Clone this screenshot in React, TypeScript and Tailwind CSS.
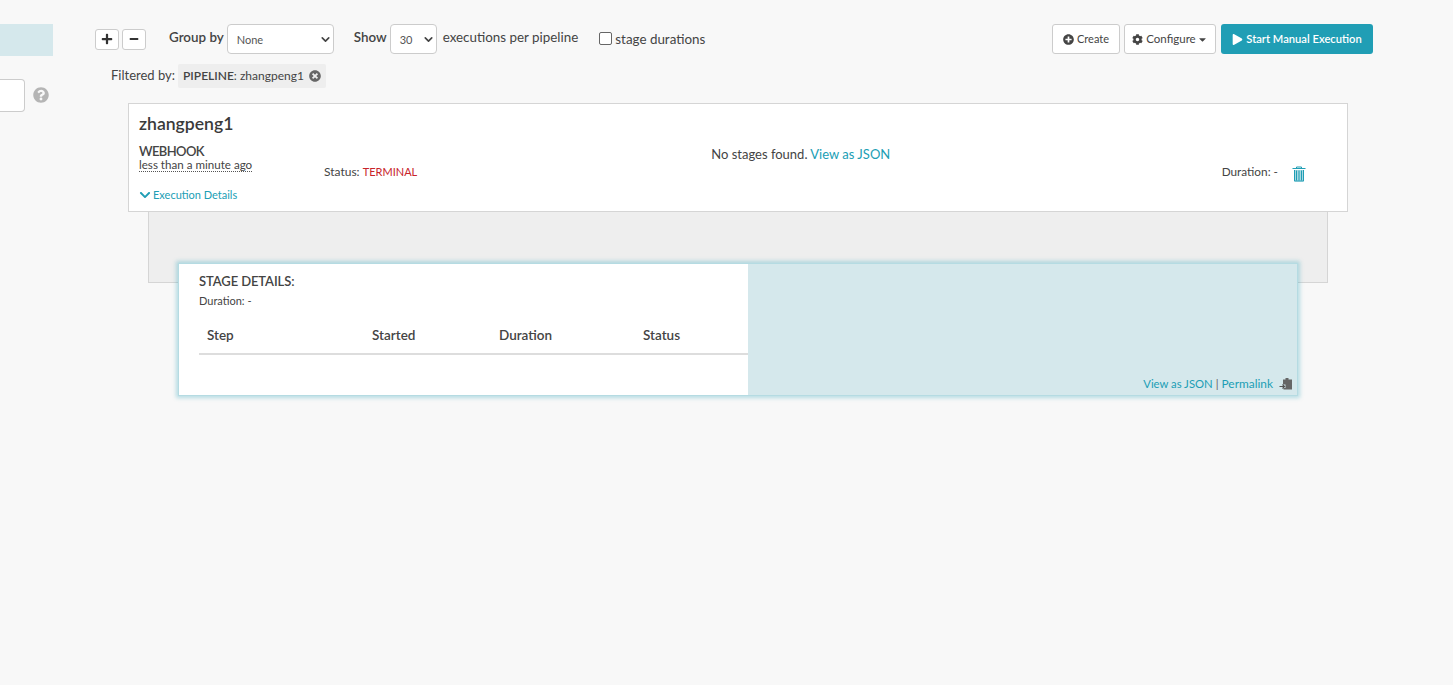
import { ChevronDown } from "lucide-react";
import { FaCog, FaPlay, FaPlusCircle, FaQuestionCircle, FaTimesCircle, FaChevronDown, FaCaretDown, FaPlus, FaMinus } from "react-icons/fa";

const font = "font-['Lato','Noto_Sans',sans-serif]";

function TrashIcon() {
  return (
    <svg width="14" height="16" viewBox="0 0 14 16" className="ml-[14px] mt-[4px]">
      <path d="M0.5 2.5h13M4.5 2.5V1h5v1.5" fill="none" stroke="#209eb5" strokeWidth="1" />
      <path d="M2 4h10v11.5H2z" fill="#a9d8e1" />
      <path d="M2.5 4v11h9V4M4.5 4.5v10M7 4.5v10M9.5 4.5v10" fill="none" stroke="#209eb5" strokeWidth="1" />
    </svg>
  );
}

function ClipboardIcon() {
  return (
    <svg width="14" height="13" viewBox="0 0 14 13" className="ml-[6px] mb-px">
      <path d="M4 2.5h2.5V1h3v1.5H13V12.5H4.5V11H6.5V7.5H4z" fill="#666" />
      <path d="M0.5 9.5h5M3.5 7.5l2 2-2 2" fill="none" stroke="#555" strokeWidth="1.2" />
    </svg>
  );
}

function FakeSelect({ value, className }: { value: string; className: string }) {
  return (
    <div className={`flex items-center justify-between rounded-[4px] border border-[#ccc] bg-white text-[11px] text-[#555] ${className}`}>
      <span className="mt-[2px]">{value}</span>
      <ChevronDown size={13} strokeWidth={3} className="text-[#444]" />
    </div>
  );
}

function Sidebar() {
  return (
    <div className="w-[95px] shrink-0 pt-[24px]">
      <div className="h-[32px] w-[53px] bg-[#d5e8ec]" />
      <div className="mt-[23px] flex items-center">
        <div className="h-[33px] w-[25px] rounded-r-[4px] border border-l-0 border-[#ccc] bg-white" />
        <FaQuestionCircle size={16} className="ml-[8px] -mt-[1px] text-[#b5b5b5]" />
      </div>
    </div>
  );
}

function Toolbar() {
  return (
    <div className="flex h-[30px] items-center text-[13.4px] text-[#444]">
      <button className="flex h-[21px] w-[24px] items-center justify-center rounded-[3px] border border-[#ccc] bg-white text-[#333]">
        <FaPlus size={12} />
      </button>
      <button className="ml-[3px] flex h-[21px] w-[24px] items-center justify-center rounded-[3px] border border-[#ccc] bg-white text-[#333]">
        <FaMinus size={10} />
      </button>
      <span className="ml-[23px] -mt-[3px] font-semibold">Group by</span>
      <FakeSelect value="None" className="ml-[3px] h-[30px] w-[107px] pl-[9px] pr-[1px]" />
      <span className="ml-[20px] -mt-[3px] font-semibold">Show</span>
      <FakeSelect value="30" className="ml-[3px] h-[30px] w-[47px] pl-[9px] pr-[1px]" />
      <span className="ml-[6px] -mt-[3px]">executions per pipeline</span>
      <span className="ml-[21px] -mt-[1px] h-[13px] w-[13px] rounded-[2px] border border-[#666] bg-white" />
      <span className="ml-[3px]">stage durations</span>
      <div className="ml-auto flex items-center text-[11px] text-[#444]">
        <button className="flex h-[30px] w-[68px] items-center justify-center gap-[3px] rounded-[3px] border border-[#ccc] bg-white">
          <FaPlusCircle size={11} />
          Create
        </button>
        <button className="ml-[4px] flex h-[30px] w-[92px] items-center justify-center gap-[3px] rounded-[3px] border border-[#ccc] bg-white text-[11.5px]">
          <FaCog size={11} />
          Configure
          <FaCaretDown size={11} className="-ml-[2px]" />
        </button>
        <button className="ml-[5px] flex h-[30px] w-[152px] items-center justify-center gap-[3px] rounded-[3px] bg-[#209eb5] text-[11.2px] font-semibold text-white">
          <FaPlay size={11} />
          Start Manual Execution
        </button>
      </div>
    </div>
  );
}

function FilterRow() {
  return (
    <div className="ml-[16px] mt-[10px] flex h-[24px] items-center text-[13px] text-[#444]">
      <span>Filtered by:</span>
      <span className="ml-[3px] flex h-[24px] items-center gap-[5px] rounded-[2px] bg-[#eee] px-[5px] text-[12px]">
        <span>
          <b className="font-semibold">PIPELINE</b>: zhangpeng1
        </span>
        <FaTimesCircle size={12} className="text-[#666]" />
      </span>
    </div>
  );
}

function ExecutionCard() {
  return (
    <div className="relative h-[109px] border border-[#d5d5d5] bg-white px-[10px] text-[#444]">
      <div className="pt-[8px] text-[17.6px] font-semibold leading-[24px] text-[#3a3a3a]">zhangpeng1</div>
      <div className="mt-[7px] flex">
        <div className="w-[185px]">
          <div className="text-[13px] font-semibold leading-[16px] tracking-[-0.6px]">WEBHOOK</div>
          <div className="w-fit border-b border-dotted border-[#555] text-[11.6px] leading-[12px]">less than a minute ago</div>
          <div className="mt-[15px] flex items-center gap-[2px] text-[11px] leading-[16px] text-[#209eb5]">
            <FaChevronDown size={12} />
            Execution Details
          </div>
        </div>
        <div className="mt-[21px] text-[12px] leading-[16px]">
          Status: <span className="text-[11px] text-[#c8232a]">TERMINAL</span>
        </div>
        <div className="ml-[294px] mt-[2px] text-[13px] leading-[18px]">
          No stages found. <span className="text-[#209eb5]">View as JSON</span>
        </div>
        <div className="ml-auto mr-[31px] mt-[21px] flex h-[16px] items-center text-[11.8px]">
          Duration: -
          <TrashIcon />
        </div>
      </div>
    </div>
  );
}

function StagePanel() {
  return (
    <div className="mb-[-114px] flex h-[133px] border border-[#b5dbe2] bg-[#d5e8ec] shadow-[0_0_4px_2px_rgba(32,158,181,0.3)]">
      <div className="w-[569px] bg-white pl-[20px] text-[#444]">
        <div className="pt-[8px] text-[13px] font-semibold leading-[18px] tracking-[-0.1px]">STAGE DETAILS:</div>
        <div className="mt-[4px] text-[11px] leading-[14px]">Duration: -</div>
        <div className="mt-[9px] flex h-[38px] items-center border-b-2 border-[#ddd] text-[13.5px] font-semibold">
          <span className="ml-[8px] w-[165px]">Step</span>
          <span className="w-[127px]">Started</span>
          <span className="w-[144px]">Duration</span>
          <span>Status</span>
        </div>
      </div>
      <div className="flex flex-1 items-end justify-end pb-[4px] pr-[4px] text-[11.3px] leading-[14px] text-[#209eb5]">
        <span>View as JSON</span>
        <span className="mx-[3px] text-[#666]">|</span>
        <span className="text-[11.9px]">Permalink</span>
        <ClipboardIcon />
      </div>
    </div>
  );
}

export default function App() {
  return (
    <div className={`flex min-h-[685px] bg-[#f8f8f8] ${font}`}>
      <Sidebar />
      <div className="w-[1278px] pt-[24px]">
        <Toolbar />
        <FilterRow />
        <div className="ml-[33px] mt-[15px] w-[1220px]">
          <ExecutionCard />
          <div className="mx-[20px] border border-t-0 border-[#d5d5d5] bg-[#eee] px-[29px] pt-[51px]">
            <StagePanel />
          </div>
        </div>
      </div>
    </div>
  );
}
